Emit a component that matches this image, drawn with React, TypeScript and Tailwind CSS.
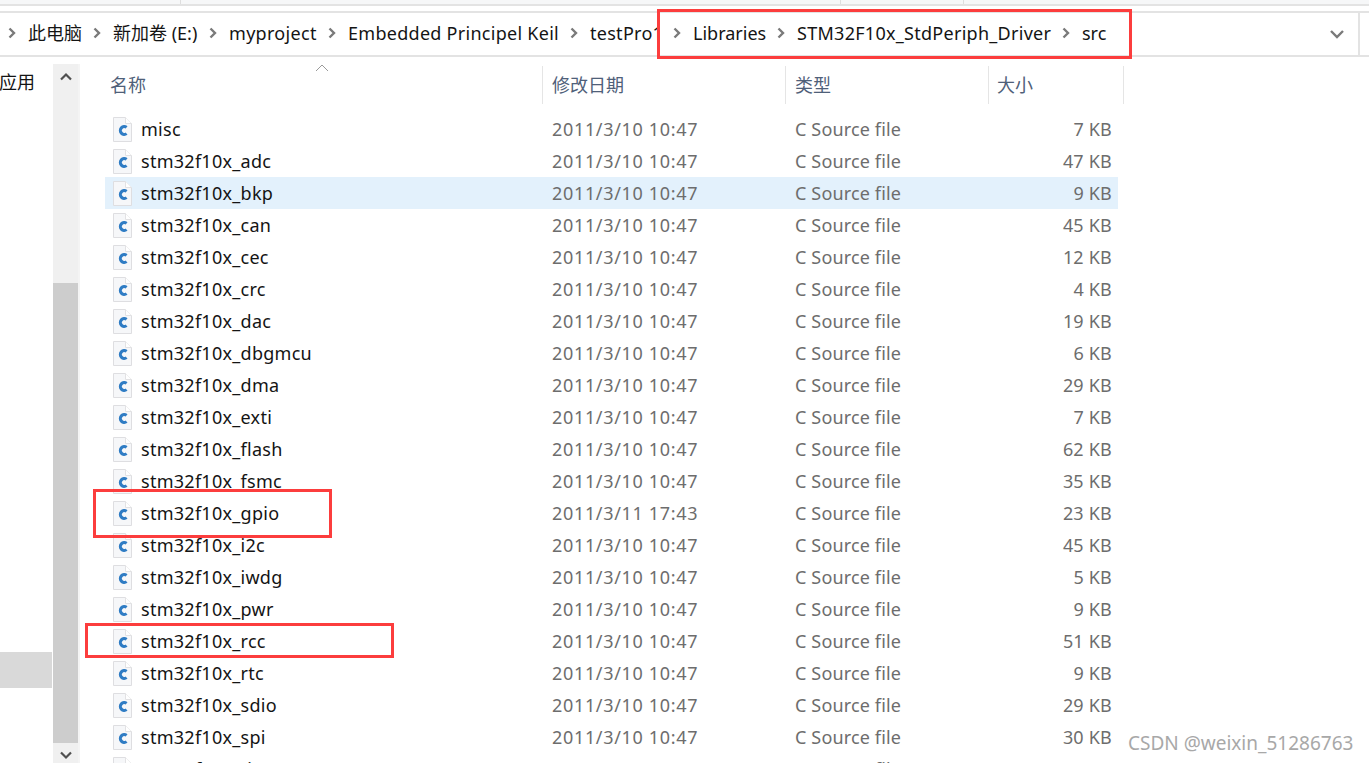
const rows: [string, string, string][] = [
  ["misc", "2011/3/10 10:47", "7 KB"],
  ["stm32f10x_adc", "2011/3/10 10:47", "47 KB"],
  ["stm32f10x_bkp", "2011/3/10 10:47", "9 KB"],
  ["stm32f10x_can", "2011/3/10 10:47", "45 KB"],
  ["stm32f10x_cec", "2011/3/10 10:47", "12 KB"],
  ["stm32f10x_crc", "2011/3/10 10:47", "4 KB"],
  ["stm32f10x_dac", "2011/3/10 10:47", "19 KB"],
  ["stm32f10x_dbgmcu", "2011/3/10 10:47", "6 KB"],
  ["stm32f10x_dma", "2011/3/10 10:47", "29 KB"],
  ["stm32f10x_exti", "2011/3/10 10:47", "7 KB"],
  ["stm32f10x_flash", "2011/3/10 10:47", "62 KB"],
  ["stm32f10x_fsmc", "2011/3/10 10:47", "35 KB"],
  ["stm32f10x_gpio", "2011/3/11 17:43", "23 KB"],
  ["stm32f10x_i2c", "2011/3/10 10:47", "45 KB"],
  ["stm32f10x_iwdg", "2011/3/10 10:47", "5 KB"],
  ["stm32f10x_pwr", "2011/3/10 10:47", "9 KB"],
  ["stm32f10x_rcc", "2011/3/10 10:47", "51 KB"],
  ["stm32f10x_rtc", "2011/3/10 10:47", "9 KB"],
  ["stm32f10x_sdio", "2011/3/10 10:47", "29 KB"],
  ["stm32f10x_spi", "2011/3/10 10:47", "30 KB"],
  ["stm32f10x_tim", "2011/3/10 10:47", "107 KB"],
];

const crumbs = [
  { t: "此电脑", w: "w-[69px] tracking-[0px]" },
  { t: "新加卷 (E:)", w: "w-[100px] tracking-[0px]" },
  { t: "myproject", w: "w-[103px] tracking-[0.3px]" },
  { t: "Embedded Principel Keil", w: "w-[226px] tracking-[0.28px]" },
  { t: "testPro1", w: "w-[87px] tracking-[0.28px]" },
  { t: "Libraries", w: "w-[88px] tracking-[0px]" },
  { t: "STM32F10x_StdPeriph_Driver", w: "w-[269px] tracking-[0.28px]" },
  { t: "src", w: "w-[30px] tracking-[0px]" },
];

function Chevron() {
  return (
    <svg width="16" height="16" viewBox="0 0 16 16" className="shrink-0">
      <path d="M5.5 3.5 L10 8 L5.5 12.5" fill="none" stroke="#7a7a7a" strokeWidth="2.4" />
    </svg>
  );
}

function CFile() {
  return (
    <svg width="19" height="25" viewBox="0 0 19 25" className="shrink-0">
      <path d="M0.5 0.5 H12.5 L18.5 6.5 V24.5 H0.5 Z" fill="#f6f7f9" stroke="#dedee1" />
      <path d="M12.5 0.5 V6.5 H18.5" fill="#ffffff" stroke="#e2e2e4" />
      <path d="M13.6 10.4 A3.9 3.9 0 1 0 13.6 16.6" fill="none" stroke="#2f7cc4" strokeWidth="3" />
    </svg>
  );
}

function Note({ className }: { className: string }) {
  return <div className={`absolute border-[3px] border-[#fc3d3d] ${className}`} />;
}

export default function App() {
  return (
    <div
      className="relative flex h-[763px] w-[1369px] flex-col overflow-hidden bg-white text-[18px] text-[#141414]"
      style={{ fontFamily: '"Noto Sans", "Noto Sans CJK SC", sans-serif' }}
    >
      <div className="relative h-[6px] shrink-0 border-b-2 border-[#e3e3e3] bg-[#f6f7f8]">
        <div className="absolute left-[180px] top-0 h-[4px] w-px bg-[#dedede]" />
        <div className="absolute left-[840px] top-0 h-[4px] w-px bg-[#dedede]" />
        <div className="absolute left-[963px] top-0 h-[4px] w-px bg-[#dedede]" />
      </div>
      <div className="h-[5px] shrink-0" />
      <div className="flex h-[46px] shrink-0 items-center border-y-2 border-[#e3e3e3] pb-[2px] pl-[4px] pr-[9px]">
        {crumbs.map((c) => (
          <div key={c.t} className="flex items-center">
            <Chevron />
            <span className={`${c.w} whitespace-nowrap pl-[8px] leading-[24px]`}>{c.t}</span>
          </div>
        ))}
        <div className="ml-auto -mb-[2px] flex h-[44px] items-center border-r-2 border-[#e3e3e3] pr-[13px]">
          <svg width="16" height="16" viewBox="0 0 16 16">
            <path d="M2 5 L8 11 L14 5" fill="none" stroke="#7a7a7a" strokeWidth="2.4" />
          </svg>
        </div>
      </div>
      <div className="flex min-h-0 flex-1 pt-[7px]">
        <div className="flex w-[53px] shrink-0 flex-col">
          <div className="-ml-[1px] h-[37px] whitespace-nowrap pt-[6px] text-[18px] leading-[24px]">应用</div>
          <div className="mr-[1px] mt-[551px] h-[36px] bg-[#d9d9d9]" />
        </div>
        <div className="flex h-full w-[25px] shrink-0 flex-col bg-[#f0f0f0]">
          <div className="flex h-[26px] items-center justify-center">
            <svg width="14" height="14" viewBox="0 0 14 14">
              <path d="M2 9.5 L7 4.5 L12 9.5" fill="none" stroke="#505050" strokeWidth="2.2" />
            </svg>
          </div>
          <div className="mt-[193px] h-[460px] bg-[#cdcdcd]" />
          <div className="flex flex-1 items-center justify-center pt-[4px]">
            <svg width="14" height="14" viewBox="0 0 14 14">
              <path d="M2 4.5 L7 9.5 L12 4.5" fill="none" stroke="#505050" strokeWidth="2.2" />
            </svg>
          </div>
        </div>
        <div className="w-[2px] shrink-0 bg-[#f4f4f4]" />
        <div className="min-w-0 flex-1 pl-[25px]">
          <div className="relative grid h-[40px] w-[1019px] grid-cols-[438px_243px_203px_135px] pt-[2px] text-[#4f6079]">
            <svg width="14" height="8" viewBox="0 0 14 8" className="absolute left-[210px] top-0">
              <path d="M1 7 L7 1 L13 7" fill="none" stroke="#9a9a9a" strokeWidth="1" />
            </svg>
            <div className="flex items-center border-r border-[#e5e5e5] pl-[5px]">名称</div>
            <div className="flex items-center border-r border-[#e5e5e5] pl-[9px]">修改日期</div>
            <div className="flex items-center border-r border-[#e5e5e5] pl-[9px]">类型</div>
            <div className="flex items-center border-r border-[#e5e5e5] pl-[8px]">大小</div>
          </div>
          <div className="mt-[9px] w-[1013px]">
            {rows.map(([name, date, size]) => (
              <div
                key={name}
                className={`grid h-[32px] grid-cols-[447px_243px_243px_74px] items-center ${name === "stm32f10x_bkp" ? "bg-[#e3f1fc]" : ""}`}
              >
                <div className="flex items-center gap-[9px] pl-[8px]">
                  <CFile />
                  <span className="tracking-[0.27px]">{name}</span>
                </div>
                <span className="tracking-[0.67px] text-[#6d6d6d]">{date}</span>
                <span className="tracking-[0.15px] text-[#6d6d6d]">C Source file</span>
                <span className="text-right tracking-[0.2px] text-[#6d6d6d]">{size}</span>
              </div>
            ))}
          </div>
        </div>
      </div>
      <Note className="left-[657px] top-[9px] h-[50px] w-[475px]" />
      <Note className="left-[93px] top-[489px] h-[49px] w-[239px]" />
      <Note className="left-[85px] top-[623px] h-[35px] w-[309px]" />
      <div className="absolute left-[1128px] top-[729px] whitespace-nowrap text-[19px] text-[#a8a8a8]">CSDN @weixin_51286763</div>
    </div>
  );
}
